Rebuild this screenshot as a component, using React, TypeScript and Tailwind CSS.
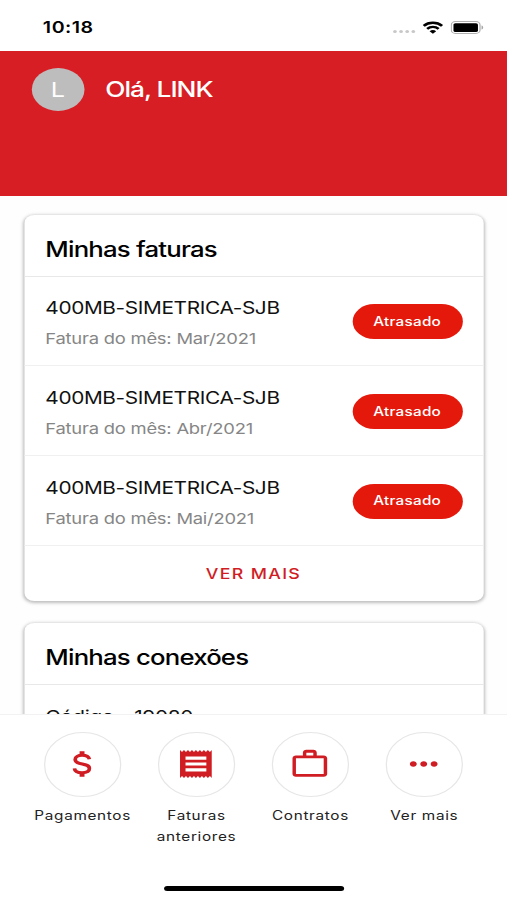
import { ReactNode } from 'react'
import { MdWorkOutline, MdMoreHoriz } from 'react-icons/md'

interface Invoice {
  id: number
  plan: string
  month: string
}

const invoices: Invoice[] = [
  { id: 1, plan: '400MB-SIMETRICA-SJB', month: 'Mar/2021' },
  { id: 2, plan: '400MB-SIMETRICA-SJB', month: 'Abr/2021' },
  { id: 3, plan: '400MB-SIMETRICA-SJB', month: 'Mai/2021' },
]

function DollarIcon() {
  return (
    <svg width="16" height="28" viewBox="0 0 16 28" fill="none" stroke="currentColor">
      <path d="M8 1.2v4M8 22.8v4" strokeWidth="4" />
      <path
        d="M14 9.2C13.5 6.4 11.2 5.3 8 5.3c-3.3 0-5.6 1.5-5.6 4.2 0 6 11.6 3 11.6 9 0 2.8-2.5 4.2-6 4.2-3.8 0-6-1.5-6.2-4.4"
        strokeWidth="3"
      />
    </svg>
  )
}

function ReceiptIcon() {
  return (
    <svg width="26" height="28" viewBox="0 0 26 28" fill="currentColor">
      <path
        fillRule="evenodd"
        d="M0 0l1.62 2 1.63-2 1.62 2L6.5 0l1.62 2 1.63-2 1.62 2L13 0l1.62 2 1.63-2 1.62 2L19.5 0l1.62 2 1.63-2 1.62 2L26 0v28l-1.62-2-1.63 2-1.62-2-1.63 2-1.62-2-1.63 2-1.62-2L13 28l-1.62-2-1.63 2-1.62-2-1.63 2-1.62-2-1.63 2-1.62-2L0 28zM4.5 6.5v3.2h17V6.5zM4.5 12.4v3.2h17v-3.2zM4.5 18.3v3.2h17v-3.2z"
      />
    </svg>
  )
}

function StatusBar() {
  return (
    <div className="flex h-[51px] shrink-0 items-center justify-between pl-[35px] pr-[19px] pt-[3px]">
      <span className="text-[16px] font-semibold tracking-[0.4px]">10:18</span>
      <div className="flex items-center">
        <div className="mr-[6px] mt-2 flex gap-[2px]">
          <i className="size-[3px] rounded-full bg-[#c8c8c8]" />
          <i className="size-[3px] rounded-full bg-[#c8c8c8]" />
          <i className="size-[3px] rounded-full bg-[#c8c8c8]" />
          <i className="size-[3px] rounded-full bg-[#c8c8c8]" />
        </div>
        <svg width="17" height="13" viewBox="0 0 17 13" className="mr-[6px]" fill="none" stroke="#000">
          <path d="M1 4.8a10.6 10.6 0 0 1 15 0" strokeWidth="2.4" />
          <path d="M3.8 7.9a6.7 6.7 0 0 1 9.4 0" strokeWidth="2.2" />
          <path d="M8.5 12.8 5.8 10.3a3.9 3.9 0 0 1 5.4 0z" fill="#000" stroke="none" />
        </svg>
        <svg width="27" height="13" viewBox="0 0 27 13">
          <rect x="0.5" y="0.5" width="23.5" height="12" rx="3.4" fill="none" stroke="#b0b0b0" />
          <rect x="2.3" y="2.2" width="20" height="8.8" rx="1.6" />
          <path d="M25.2 4.4v4.2c1-.4 1.4-1.2 1.4-2.1s-.4-1.7-1.4-2.1z" fill="#a8a8a8" />
        </svg>
      </div>
    </div>
  )
}

function Card({ title, children }: { title: string; children: ReactNode }) {
  return (
    <section className="mx-[19.5px] rounded-[8px] bg-white shadow-[0_1px_3px_1px_rgba(0,0,0,0.26)]">
      <h2 className="flex h-[62px] items-center border-b border-[#e8e8e8] px-[17.5px] pt-[9px] text-[21px] font-medium tracking-[-0.65px]">
        {title}
      </h2>
      {children}
    </section>
  )
}

function InvoiceRow({ invoice }: { invoice: Invoice }) {
  return (
    <li className="flex h-[89.7px] items-center justify-between border-b border-[#f0f0f0] pl-[17.5px] pr-[17px] pt-[2px]">
      <div className="pt-[4px]">
        <p className="text-[17px] leading-[30px] tracking-[-0.3px] text-[#111]">{invoice.plan}</p>
        <p className="text-[15px] leading-[31px] tracking-[-0.18px] text-[#868686]">
          Fatura do mês: {invoice.month}
        </p>
      </div>
      <span className="flex h-[35px] w-[90px] items-center justify-center rounded-full bg-[#e4190c] pt-px text-[12.5px] font-medium tracking-[0.2px] text-white">
        Atrasado
      </span>
    </li>
  )
}

function NavItem({ icon, label }: { icon: ReactNode; label: string }) {
  return (
    <button type="button" className="flex w-[93px] flex-col items-center">
      <span className="flex h-[65px] w-[63.5px] items-center justify-center rounded-full border border-[#e6e6e6] pb-px pr-[1.5px] text-[#d01d24]">
        {icon}
      </span>
      <span className="mt-2 w-[84px] text-center text-[12.5px] leading-[21px] tracking-[0.55px] text-[#222]">
        {label}
      </span>
    </button>
  )
}

export default function App() {
  return (
    <div className="flex h-[900px] w-[414px] origin-top-left scale-x-[1.2246] flex-col overflow-hidden bg-white font-['Inter',sans-serif] text-black">
      <StatusBar />
      <header className="flex h-[144.5px] shrink-0 items-start bg-[#d71e25] pl-[26px] pt-[17px]">
        <div className="flex h-[43px] w-[42.5px] items-center justify-center rounded-full bg-[#bdbdbd] pt-px text-[20.5px] text-white">
          L
        </div>
        <h1 className="ml-[17.5px] text-[21.5px] font-medium leading-[43px] tracking-[-0.85px] text-white">
          Olá, LINK
        </h1>
      </header>
      <main className="flex min-h-0 flex-1 flex-col gap-[22px] overflow-hidden bg-[#fefefe] pt-[19px]">
        <Card title="Minhas faturas">
          <ul>
            {invoices.map((invoice) => (
              <InvoiceRow key={invoice.id} invoice={invoice} />
            ))}
          </ul>
          <button
            type="button"
            className="h-[55.5px] w-full pt-[2px] text-[14.5px] font-medium tracking-[1.1px] text-[#d01d24]"
          >
            VER MAIS
          </button>
        </Card>
        <Card title="Minhas conexões">
          <p className="h-[80px] px-[17.5px] pt-[17px] text-[17px] leading-[30px] tracking-[-0.28px] text-[#111]">
            Código - 19080
          </p>
        </Card>
      </main>
      <nav className="flex h-[186.5px] shrink-0 flex-col items-center border-t border-[#f2f2f2] bg-white pt-[17px]">
        <div className="flex h-[137px]">
          <NavItem icon={<DollarIcon />} label="Pagamentos" />
          <NavItem icon={<ReceiptIcon />} label="Faturas anteriores" />
          <NavItem icon={<MdWorkOutline className="size-[34px]" />} label="Contratos" />
          <NavItem icon={<MdMoreHoriz className="size-[34px]" />} label="Ver mais" />
        </div>
        <div className="mt-[17px] h-[5.5px] w-[147px] rounded-full bg-black" />
      </nav>
    </div>
  )
}
